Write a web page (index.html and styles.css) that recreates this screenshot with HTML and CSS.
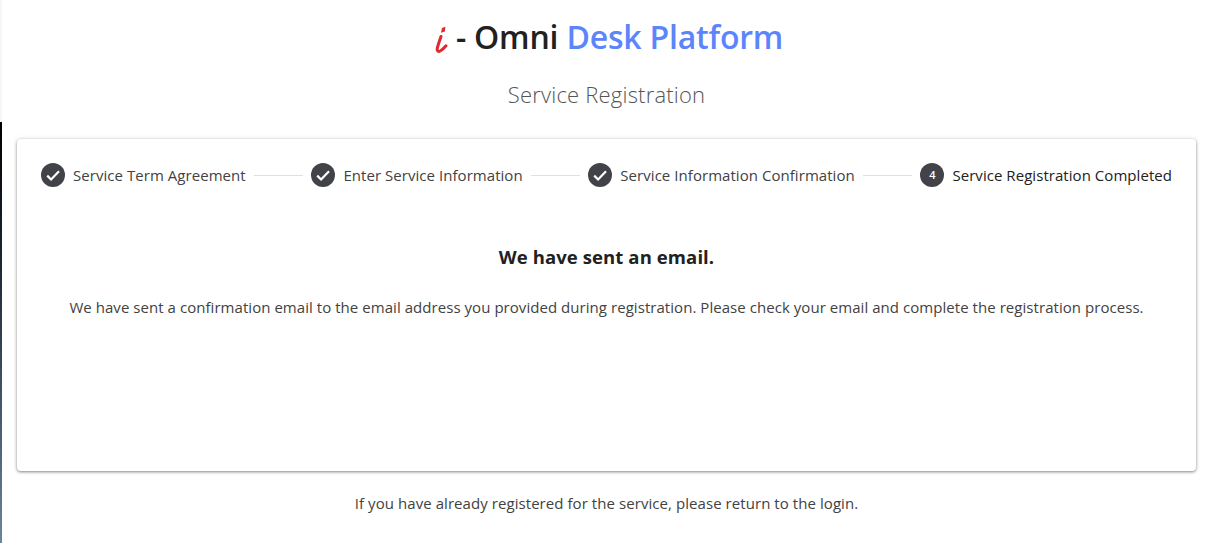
FILE: index.html
```html
<!DOCTYPE html>
<html lang="en">

<head>
    <meta charset="UTF-8" />
    <title>Service Registration</title>
    <link rel="stylesheet" href="styles.css">
</head>

<body>
    <div class="edge"></div>
    <div class="page">
        <header class="brand">
            <h1><svg class="logo-i" viewBox="0 0 14 30" width="14" height="30" aria-hidden="true">
                    <path class="logo-stroke" d="M7 12.5 C5.8 16 4.4 20 3.4 23.6 C2.6 27 4.4 28 6.2 27 C8.2 25.9 10 24.2 12 21.8" />
                    <path class="logo-dot" d="M8 4 L11.4 2.8 L10.8 7.6 L7 8.8 Z" />
                </svg> - Omni <span class="accent">Desk Platform</span></h1>
            <p class="subtitle">Service Registration</p>
        </header>

        <section class="card">
            <ol class="stepper">
                <li class="step">
                    <svg class="step-icon" viewBox="0 0 24 24"><circle cx="12" cy="12" r="12" /><path class="tick" d="M6.2 12.6l3.9 3.9 7.9-8.2" /></svg>
                    <span>Service Term Agreement</span>
                </li>
                <li class="line"></li>
                <li class="step">
                    <svg class="step-icon" viewBox="0 0 24 24"><circle cx="12" cy="12" r="12" /><path class="tick" d="M6.2 12.6l3.9 3.9 7.9-8.2" /></svg>
                    <span>Enter Service Information</span>
                </li>
                <li class="line"></li>
                <li class="step">
                    <svg class="step-icon" viewBox="0 0 24 24"><circle cx="12" cy="12" r="12" /><path class="tick" d="M6.2 12.6l3.9 3.9 7.9-8.2" /></svg>
                    <span>Service Information Confirmation</span>
                </li>
                <li class="line"></li>
                <li class="step current">
                    <span class="step-num">4</span>
                    <span>Service Registration Completed</span>
                </li>
            </ol>
            <div class="message">
                <h2>We have sent an email.</h2>
                <p>We have sent a confirmation email to the email address you provided during registration. Please check your email and complete the registration process.</p>
            </div>
        </section>

        <p class="back">If you have already registered for the service, please return to the login.</p>
    </div>
</body>

</html>
```

FILE: styles.css
```css
* {
    margin: 0;
    padding: 0;
    box-sizing: border-box;
}

html,
body {
    height: 100%;
    overflow: hidden;
}

body {
    display: flex;
    font-family: 'Open Sans', 'Noto Sans', sans-serif;
    background-color: #ffffff;
    color: #212121;
}

.edge {
    flex: 0 0 2px;
    background: linear-gradient(#f6f6f6 122px, #000000 122px, #1f2a38 50%, #6b8599);
}

.page {
    flex: 1;
    padding: 0 15px;
    min-width: 0;
}

.brand {
    text-align: center;
    padding-top: 14px;
}

h1 {
    font-size: 32px;
    font-weight: 600;
    line-height: 46px;
    letter-spacing: -0.2px;
    padding-left: 4px;
}

.logo-i {
    vertical-align: -5px;
}

.logo-stroke {
    fill: none;
    stroke: #e0282e;
    stroke-width: 3;
    stroke-linecap: round;
}

.logo-dot {
    fill: #e0282e;
}

.accent {
    color: #5c85fb;
}

.subtitle {
    margin-top: 18px;
    font-size: 22px;
    font-weight: 300;
    line-height: 32px;
    color: #555555;
    letter-spacing: 0.2px;
}

.card {
    height: 332px;
    margin-top: 29px;
    border-radius: 4px;
    background-color: #ffffff;
    box-shadow: 0 1px 3px rgba(0, 0, 0, 0.45), 0 0 6px rgba(0, 0, 0, 0.08);
}

.stepper {
    display: flex;
    align-items: center;
    list-style: none;
    padding: 24px 24px 0;
}

.step {
    display: flex;
    align-items: center;
    gap: 8px;
    font-size: 15px;
    line-height: 24px;
    letter-spacing: 0.05px;
    color: #424242;
    white-space: nowrap;
}

.step.current {
    color: #212121;
}

.step-icon {
    width: 24px;
    height: 24px;
    fill: #424349;
}

.tick {
    fill: none;
    stroke: #ffffff;
    stroke-width: 2.2;
}

.step-num {
    width: 24px;
    height: 24px;
    border-radius: 50%;
    background-color: #424349;
    color: #ffffff;
    font-size: 11px;
    font-weight: 600;
    text-align: center;
}

.line {
    flex: 1;
    height: 1px;
    margin: 0 8px;
    background-color: #e0e0e0;
}

.message {
    text-align: center;
}

h2 {
    margin-top: 56px;
    font-size: 18.5px;
    font-weight: 700;
    line-height: 28px;
    letter-spacing: 0.1px;
}

.message p {
    margin-top: 25px;
    font-size: 15px;
    line-height: 22px;
    letter-spacing: 0.05px;
    color: #424242;
}

.back {
    margin-top: 21px;
    text-align: center;
    font-size: 15px;
    line-height: 22px;
    letter-spacing: 0.065px;
    color: #424242;
}
```
